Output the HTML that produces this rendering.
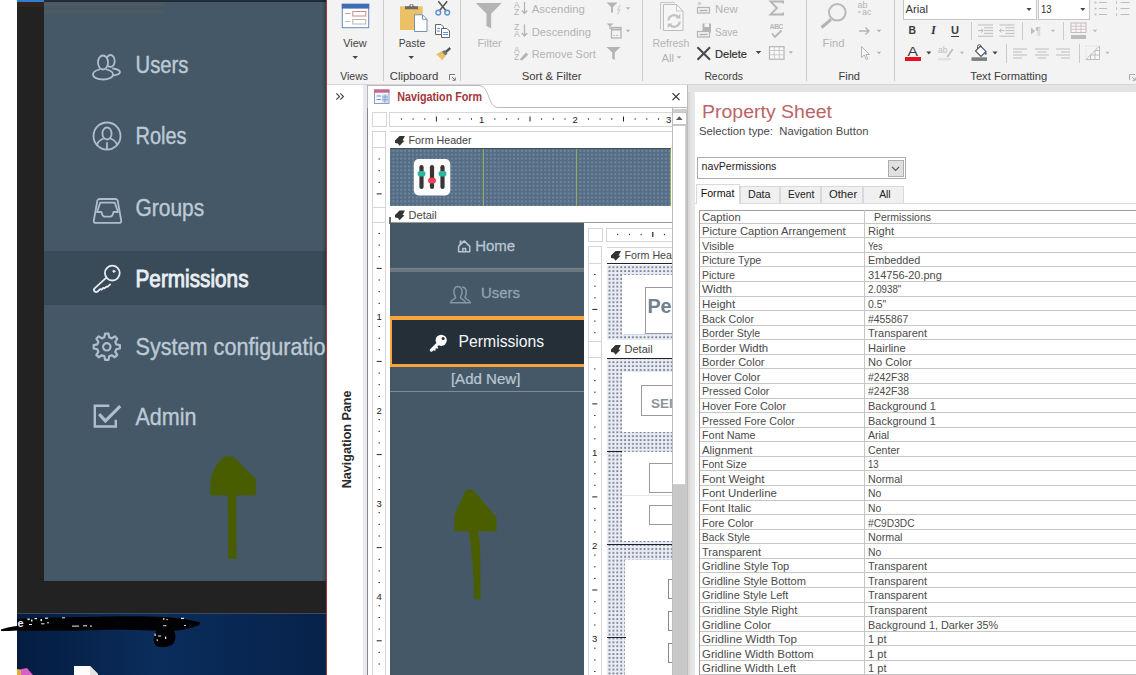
<!DOCTYPE html><html><head><meta charset="utf-8"><title>Access Navigation Form</title><style>
html,body{margin:0;padding:0;}
body{width:1136px;height:675px;overflow:hidden;position:relative;background:#fff;font-family:"Liberation Sans",sans-serif;}
.a{position:absolute;}
.t{position:absolute;white-space:pre;font-family:"Liberation Sans",sans-serif;}
svg{position:absolute;overflow:visible;}
</style></head><body><div class="a" style="left:17px;top:0px;width:310px;height:675px;background:#222222;"></div>
<div class="a" style="left:17px;top:0px;width:120px;height:2px;background:#2f7fd0;"></div>
<div class="a" style="left:44px;top:2px;width:282px;height:579px;background:#455867;"></div>
<div class="a" style="left:44px;top:0px;width:282px;height:2px;background:#1f2c37;"></div>
<div class="a" style="left:44px;top:251px;width:282px;height:54px;background:#394a58;"></div>
<div class="a" style="left:44px;top:3px;width:120px;height:3px;background:rgba(120,95,80,.28);"></div>
<div class="a" style="left:44px;top:9.5px;width:120px;height:3px;background:rgba(120,95,80,.22);"></div>
<div class="a" style="left:17px;top:2px;width:27px;height:5px;background:rgba(80,40,25,.35);"></div>
<div class="a" style="left:322px;top:0px;width:4px;height:581px;background:linear-gradient(90deg,rgba(0,0,0,0),rgba(0,0,0,.25));"></div>
<div class="a" style="left:17px;top:613px;width:310px;height:62px;background:linear-gradient(90deg,#041c40,#0a2d5c 45%,#06224a);"></div>
<div class="a" style="left:17px;top:613px;width:310px;height:1px;background:#3a4a5c;"></div>
<div class="a" style="left:326px;top:0px;width:1px;height:675px;background:#a4373a;"></div>
<span class="t" style="left:135.50px;top:53.30px;font-size:20.29px;line-height:27px;color:#bdcad5;transform:scaleY(1.200);transform-origin:0 20.50px;-webkit-text-stroke:0.35px #bdcad5;">Users</span>
<span class="t" style="left:135.50px;top:123.80px;font-size:19.95px;line-height:26px;color:#bdcad5;transform:scaleY(1.221);transform-origin:0 20.00px;-webkit-text-stroke:0.35px #bdcad5;">Roles</span>
<span class="t" style="left:135.50px;top:195.30px;font-size:20.95px;line-height:28px;color:#bdcad5;transform:scaleY(1.162);transform-origin:0 21.50px;-webkit-text-stroke:0.35px #bdcad5;">Groups</span>
<span class="t" style="left:135.50px;top:265.80px;font-size:20.75px;line-height:27px;color:#e9eef2;transform:scaleY(1.194);transform-origin:0 21.00px;-webkit-text-stroke:0.8px #e9eef2;">Permissions</span>
<span class="t" style="left:135.50px;top:333.00px;font-size:21.63px;line-height:29px;color:#bdcad5;transform:scaleY(1.126);transform-origin:0 22.00px;-webkit-text-stroke:0.35px #bdcad5;">System configuration</span>
<span class="t" style="left:135.50px;top:404.00px;font-size:21.52px;line-height:28px;color:#bdcad5;transform:scaleY(1.131);transform-origin:0 21.00px;-webkit-text-stroke:0.35px #bdcad5;">Admin</span>
<div class="a" style="left:326px;top:0px;width:1px;height:675px;background:#a4373a;"></div>
<svg style="left:92px;top:52px" width="30" height="30" viewBox="0 0 30 30" ><g fill="none" stroke="#adbfcd" stroke-width="1.8" stroke-linecap="round" stroke-linejoin="round"><ellipse cx="18.5" cy="9" rx="4.2" ry="6"/><path d="M21 16.5c4 .6 7 1.8 7 3.6 0 1.6-2.5 2.8-6 3.2"/><ellipse cx="11" cy="10.5" rx="5" ry="7" fill="#455867"/><path d="M7.5 17.5C3.5 18.5 1 20.300 1 22.500c0 3 4.500 5 10 5s10-2 10-5c0-2.200-2.500-4-6.500-5"/></g></svg>
<svg style="left:92px;top:121px" width="30" height="30" viewBox="0 0 30 30" ><g fill="none" stroke="#adbfcd" stroke-width="1.8" stroke-linecap="round" stroke-linejoin="round"><circle cx="15" cy="15" r="13.5"/><ellipse cx="15" cy="12.5" rx="4.6" ry="6"/><path d="M11.500 17.500C8 19 5.500 21 5 24M18.500 17.500C22 19 24.500 21 25 24M15 22v6"/></g></svg>
<svg style="left:0px;top:0px" width="1136" height="675" viewBox="0 0 1136 675" ><g fill="none" stroke="#adbfcd" stroke-width="1.8" stroke-linecap="round" stroke-linejoin="round"><path d="M99.500 199H115.500Q117.300 199 117.700 200.800L121.200 220.500Q121.500 222.900 119.200 222.900H95.800Q93.500 222.900 93.800 220.500L97.300 200.800Q97.700 199 99.500 199Z"/><path d="M100.200 202.700H114.800L118 212H113.500Q112.500 216.700 110.300 216.700H104.700Q102.500 216.700 101.500 212H97Z"/></g></svg>
<svg style="left:92px;top:264px" width="30" height="28" viewBox="0 0 30 28" ><g fill="none" stroke="#e6ecf1" stroke-width="1.8" stroke-linecap="round" stroke-linejoin="round"><circle cx="20.300" cy="9.100" r="7.400"/><circle cx="21.900" cy="7.300" r="1.100" fill="#e6ecf1" stroke-width=".8"/><path d="M14.400 13.600L2.600 24.300a2.200 2.200 0 0 0 3 3.200l2.600-2.400 1.300.5 1.700-1.600 1.300.3 1.800-1.700 1.200.3 2.600-2.500"/></g></svg>
<svg style="left:92px;top:332px" width="30" height="30" viewBox="0 0 30 30" ><g fill="none" stroke="#adbfcd" stroke-width="2.2" stroke-linecap="round" stroke-linejoin="round"><polygon points="13.09,1.71 16.51,1.71 17.22,5.30 19.80,6.37 22.85,4.33 25.27,6.75 23.23,9.80 24.29,12.37 27.89,13.09 27.89,16.51 24.30,17.22 23.23,19.80 25.27,22.85 22.85,25.27 19.80,23.23 17.23,24.29 16.51,27.89 13.09,27.89 12.38,24.30 9.80,23.23 6.75,25.27 4.33,22.85 6.37,19.80 5.31,17.23 1.71,16.51 1.71,13.09 5.30,12.38 6.37,9.80 4.33,6.75 6.75,4.33 9.80,6.37 12.37,5.31"/><circle cx="14.800" cy="14.800" r="3.700"/></g></svg>
<svg style="left:92px;top:403px" width="30" height="27" viewBox="0 0 30 27" ><g fill="none" stroke="#adbfcd" stroke-width="2.400" stroke-linejoin="miter"><path d="M17.300 2.800H2.800V23.500H23.800V16.700"/><path d="M7.200 11.100L13.400 17.900L28.200 3.100" stroke-width="3.100"/></g></svg>
<svg style="left:0px;top:0px" width="1136" height="675" viewBox="0 0 1136 675" ><path d="M224.300 456.400h8.800L255.800 479v16.400h-19.600l.4 63.500h-8.400l-.4-63.500h-17.400v-15.400Q214.500 463.500 224.300 456.400z" fill="#485d00"/></svg>
<svg style="left:0px;top:0px" width="1136" height="675" viewBox="0 0 1136 675" ><path d="M1 629.500C6 627.500 12 626.800 17 626V619C40 617.500 80 617 110 616.500C130 616 150 616.300 165 617C180 618 192 620 200 622.500C201 624.500 198 626 192 627.500C185 630 175 631.500 165 631C140 630.500 120 629.500 100 630C70 631 40 631 17 630.500C12 631 6 631 1 631Z" fill="#020204"/><path d="M156 631C160 629.500 170 629.500 174 631C176 634 176 640 173 644C168 647.500 160 648 156 646C153 642 152.500 636 156 631Z" fill="#020204"/><rect x="27.5" y="618.5" width="2.2" height="1.6" fill="#e8edf2"/><rect x="31" y="619.5" width="1.5" height="2" fill="#e8edf2"/><rect x="34.5" y="618" width="2.5" height="1.2" fill="#e8edf2"/><rect x="40.5" y="619" width="1.5" height="2.2" fill="#e8edf2"/><rect x="45" y="617.6" width="3" height="1.2" fill="#e8edf2"/><rect x="29" y="624" width="3" height="1" fill="#e8edf2"/><rect x="41" y="623.3" width="3.5" height="1" fill="#e8edf2"/><rect x="47" y="622.3" width="2" height="1" fill="#e8edf2"/><rect x="72" y="625.6" width="7" height="1" fill="#e8edf2"/><rect x="83" y="625.3" width="4" height="1" fill="#e8edf2"/><rect x="90" y="625.6" width="2" height="1" fill="#e8edf2"/><rect x="62" y="617.3" width="3" height="1" fill="#e8edf2"/><rect x="163" y="618.3" width="1.5" height="1.5" fill="#e8edf2"/><rect x="166.5" y="619" width="1.2" height="1.2" fill="#e8edf2"/><rect x="181" y="617.8" width="3" height="1.2" fill="#e8edf2"/><rect x="163" y="625.3" width="3.5" height="0.9" fill="#e8edf2"/><rect x="184" y="625" width="2" height="0.9" fill="#e8edf2"/><rect x="154.5" y="633.5" width="1.2" height="2.5" fill="#e8edf2"/><rect x="158" y="635.5" width="3" height="1" fill="#e8edf2"/><rect x="165" y="636.5" width="1.2" height="2.5" fill="#e8edf2"/><rect x="156.5" y="639.5" width="1.5" height="1.2" fill="#e8edf2"/></svg>
<span class="t" style="left:17.50px;top:615.80px;font-size:11px;line-height:15px;color:#e8edf2;font-weight:700;">e</span>
<svg style="left:0px;top:0px" width="1136" height="675" viewBox="0 0 1136 675" ><path d="M74 666h16l8 8v1H74z" fill="#fdfdfd"/><path d="M90 666l8 8v1h-8z" fill="#e4e4e4"/><path d="M17 670l10-2 6 7H17z" fill="#d860c8"/><path d="M17 669l4 1v5h-4z" fill="#e0b030"/></svg>
<div class="a" style="left:327px;top:0px;width:809px;height:84px;background:#f3f3f3;"></div>
<div class="a" style="left:327px;top:84px;width:809px;height:1px;background:#d6d6d6;"></div>
<div class="a" style="left:382.5px;top:0px;width:1px;height:81px;background:#cacaca;"></div>
<div class="a" style="left:459.5px;top:0px;width:1px;height:81px;background:#cacaca;"></div>
<div class="a" style="left:642px;top:0px;width:1px;height:81px;background:#cacaca;"></div>
<div class="a" style="left:805.5px;top:0px;width:1px;height:81px;background:#cacaca;"></div>
<div class="a" style="left:893.5px;top:0px;width:1px;height:81px;background:#cacaca;"></div>
<span class="t" style="left:340.30px;top:70.10px;font-size:10.42px;line-height:14px;color:#3b3b3b;transform:scaleY(1.126);transform-origin:0 10.50px;">Views</span>
<span class="t" style="left:389.80px;top:69.10px;font-size:11.34px;line-height:15px;color:#3b3b3b;transform:scaleY(1.035);transform-origin:0 11.50px;">Clipboard</span>
<span class="t" style="left:521.70px;top:69.10px;font-size:11.33px;line-height:15px;color:#3b3b3b;transform:scaleY(1.036);transform-origin:0 11.50px;">Sort &amp; Filter</span>
<span class="t" style="left:704.40px;top:70.10px;font-size:10.37px;line-height:14px;color:#3b3b3b;transform:scaleY(1.132);transform-origin:0 10.50px;">Records</span>
<span class="t" style="left:838.50px;top:69.10px;font-size:11.05px;line-height:15px;color:#3b3b3b;transform:scaleY(1.062);transform-origin:0 11.50px;">Find</span>
<span class="t" style="left:970.30px;top:69.10px;font-size:11.18px;line-height:15px;color:#3b3b3b;transform:scaleY(1.050);transform-origin:0 11.50px;">Text Formatting</span>
<span class="t" style="left:343.20px;top:35.50px;font-size:10.93px;line-height:15px;color:#444444;transform:scaleY(1.061);transform-origin:0 11.50px;">View</span>
<span class="t" style="left:398.70px;top:36.50px;font-size:10.36px;line-height:14px;color:#444444;transform:scaleY(1.119);transform-origin:0 10.50px;">Paste</span>
<span class="t" style="left:477.40px;top:35.50px;font-size:10.98px;line-height:15px;color:#b4b4b4;transform:scaleY(1.056);transform-origin:0 11.50px;">Filter</span>
<span class="t" style="left:652.50px;top:36.00px;font-size:10.56px;line-height:14px;color:#b4b4b4;transform:scaleY(1.098);transform-origin:0 11.00px;">Refresh</span>
<span class="t" style="left:661.50px;top:50.60px;font-size:11.24px;line-height:15px;color:#b4b4b4;transform:scaleY(1.031);transform-origin:0 11.50px;">All</span>
<span class="t" style="left:822.60px;top:35.50px;font-size:11.21px;line-height:15px;color:#b4b4b4;transform:scaleY(1.035);transform-origin:0 11.50px;">Find</span>
<span class="t" style="left:531.70px;top:2.40px;font-size:11.41px;line-height:15px;color:#b4b4b4;transform:scaleY(1.016);transform-origin:0 11.50px;">Ascending</span>
<span class="t" style="left:531.70px;top:24.80px;font-size:11.23px;line-height:15px;color:#b4b4b4;transform:scaleY(1.033);transform-origin:0 11.50px;">Descending</span>
<span class="t" style="left:531.70px;top:46.80px;font-size:10.97px;line-height:15px;color:#b4b4b4;transform:scaleY(1.057);transform-origin:0 11.50px;">Remove Sort</span>
<span class="t" style="left:715.00px;top:2.40px;font-size:11.39px;line-height:15px;color:#b4b4b4;transform:scaleY(1.018);transform-origin:0 11.50px;">New</span>
<span class="t" style="left:715.00px;top:25.80px;font-size:10.09px;line-height:14px;color:#b4b4b4;transform:scaleY(1.149);transform-origin:0 10.50px;">Save</span>
<span class="t" style="left:715.00px;top:46.80px;font-size:11.07px;line-height:15px;color:#2b2b2b;transform:scaleY(1.047);transform-origin:0 11.50px;-webkit-text-stroke:.15px #2b2b2b;">Delete</span>
<div class="a" style="left:902.5px;top:-1px;width:134px;height:20.5px;background:#fff;border:1px solid #c6c6c6;box-sizing:border-box;"></div>
<div class="a" style="left:1037.5px;top:-1px;width:52px;height:20.5px;background:#fff;border:1px solid #c6c6c6;box-sizing:border-box;"></div>
<span class="t" style="left:905.60px;top:1.80px;font-size:11.19px;line-height:15px;color:#333;transform:scaleY(1.036);transform-origin:0 11.50px;">Arial</span>
<span class="t" style="left:1041.00px;top:3.30px;font-size:9.52px;line-height:13px;color:#333;transform:scaleY(1.218);transform-origin:0 10.00px;">13</span>
<span class="t" style="left:908.50px;top:24.00px;font-size:10.38px;line-height:14px;color:#3b3b3b;font-weight:700;transform:scaleY(1.117);transform-origin:0 10.50px;">B</span>
<span class="t" style="left:931.00px;top:22.00px;font-size:12.5px;line-height:17px;color:#3b3b3b;font-weight:700;font-style:italic;font-family:'Liberation Serif';">I</span>
<span class="t" style="left:951.00px;top:23.00px;font-size:11.07px;line-height:15px;color:#3b3b3b;font-weight:700;transform:scaleY(1.047);transform-origin:0 11.50px;">U</span>
<div class="a" style="left:950.8px;top:36.2px;width:8.4px;height:1px;background:#3b3b3b;"></div>
<div class="a" style="left:970.5px;top:22px;width:1px;height:18px;background:#cacaca;"></div>
<div class="a" style="left:1021.5px;top:22px;width:1px;height:18px;background:#cacaca;"></div>
<div class="a" style="left:1063px;top:22px;width:1px;height:18px;background:#cacaca;"></div>
<div class="a" style="left:1005.5px;top:44px;width:1px;height:19px;background:#cacaca;"></div>
<div class="a" style="left:1078.5px;top:44px;width:1px;height:19px;background:#cacaca;"></div>
<span class="t" style="left:907.50px;top:40.20px;font-size:15.74px;line-height:21px;color:#3b3b3b;transform:scaleY(0.810);transform-origin:0 16.00px;">A</span>
<div class="a" style="left:905px;top:57.3px;width:15.5px;height:3.6px;background:#e81123;"></div>
<svg style="left:0px;top:0px" width="1136" height="675" viewBox="0 0 1136 675" ><path d="M352.45 56.00h5.50l-2.75 3.00z" fill="#444444"/><path d="M408.45 56.00h5.50l-2.75 3.00z" fill="#444444"/><path d="M676.75 56.25h4.50l-2.25 2.50z" fill="#b4b4b4"/><path d="M755.75 51.00h5.50l-2.75 3.00z" fill="#444444"/><path d="M788.55 51.25h4.50l-2.25 2.50z" fill="#b4b4b4"/><path d="M625.75 7.25h4.50l-2.25 2.50z" fill="#b4b4b4"/><path d="M625.75 29.75h4.50l-2.25 2.50z" fill="#b4b4b4"/><rect x="342.3" y="4.3" width="26.4" height="23.4" fill="#fff" stroke="#6787b7" stroke-width="1"/><rect x="341.8" y="3.8" width="27.4" height="4.800" fill="#3e6db5"/><path d="M345 13.500h5.500" stroke="#d79a9a" stroke-width="1"/><rect x="352.8" y="11.500" width="13" height="4.500" fill="#fff" stroke="#d08a8a"/><path d="M345 21.500h5.500" stroke="#c2c2c2" stroke-width="1"/><rect x="352.8" y="19.500" width="13" height="4.500" fill="#fff" stroke="#b5b5b5"/><rect x="400" y="6.300" width="22.700" height="23.700" fill="#ecc165"/><path d="M405 9.200v-3h4.200a2.300 2.300 0 0 1 4.600 0H418v3z" fill="#6a6a6a"/><circle cx="411.500" cy="5.500" r="1" fill="#f3f3f3"/><path d="M414.500 14.800h8l4.500 4.500v12.200h-12.500z" fill="#fff" stroke="#7a8fb5" stroke-width="1"/><path d="M422.500 14.800v4.500h4.500" fill="none" stroke="#7a8fb5" stroke-width="1"/><path d="M438.300 1.200l8.200 10M447.200 1.200l-8.200 10" stroke="#555" stroke-width="1.500" fill="none"/><circle cx="438.300" cy="12.600" r="2.400" fill="none" stroke="#5d93d6" stroke-width="1.400"/><circle cx="447.200" cy="12.600" r="2.400" fill="none" stroke="#5d93d6" stroke-width="1.400"/><path d="M435.500 24.500h5.500l2.500 2.500v7.500h-8z" fill="#fff" stroke="#666" stroke-width="1"/><path d="M441.500 28.500h5.500l2.500 2.500v6.500h-8z" fill="#fff" stroke="#666" stroke-width="1"/><path d="M437 28.500h3M437 31h3M443 32.500h5M443 34.500h5" stroke="#5d93d6" stroke-width="1"/><path d="M444.500 51.500l5-4.500 1.500 2-5 4.500z" fill="#555"/><path d="M441.500 52l3-2 3 3.800-2.500 2z" fill="#777"/><path d="M436 54.500l5.500-3.200 4 5-3.500 4.200c-1.500-2.500-3.500-4.500-6-6z" fill="#ecc165"/><path d="M475.80 3.00h26.00l-10.66 10.71v14.79l-4.68 -2.55v-12.24z" fill="#b4b4b4"/><path d="M606.50 2.50h11.00l-4.51 4.41v6.09l-1.98 -1.05v-5.04z" fill="#b4b4b4"/><path d="M620.300 5l-2.600 4.600h2.200l-2.400 5" stroke="#cdcdcd" fill="none" stroke-width="1.100"/><path d="M606.50 23.50h7.00l-2.87 2.52v3.48l-1.26 -0.60v-2.88z" fill="#b4b4b4"/><rect x="611.500" y="27.500" width="9.500" height="10.500" fill="none" stroke="#b4b4b4" stroke-width="1.300"/><path d="M611.500 29.500h9.500" stroke="#b4b4b4" stroke-width="2"/><path d="M613.500 35.500h5.500" stroke="#b4b4b4" stroke-dasharray="1.500 1" stroke-width="1"/><path d="M606.50 47.00h14.00l-5.74 5.46v7.54l-2.52 -1.30v-6.24z" fill="#b4b4b4"/><text x="514" y="7.5" font-size="8.500" fill="#b4b4b4" font-family="Liberation Sans">A</text><text x="514" y="14.5" font-size="8.500" fill="#b4b4b4" font-family="Liberation Sans">Z</text><path d="M524.500 2.0v11.500M521.800 10.5l2.700 3 2.700-3" fill="none" stroke="#b4b4b4" stroke-width="1.300"/><text x="514" y="30.0" font-size="8.500" fill="#b4b4b4" font-family="Liberation Sans">Z</text><text x="514" y="37.0" font-size="8.500" fill="#b4b4b4" font-family="Liberation Sans">A</text><path d="M524.500 24.5v11.500M521.800 33.0l2.700 3 2.700-3" fill="none" stroke="#b4b4b4" stroke-width="1.300"/><text x="514" y="52.5" font-size="8.500" fill="#b4b4b4" font-family="Liberation Sans">A</text><text x="514" y="59.5" font-size="8.500" fill="#b4b4b4" font-family="Liberation Sans">Z</text><path d="M520.500 58.500l5.500-6 2.200 2.200-5.700 5.500h-2.500z" fill="#b4b4b4"/><path d="M660.500 2.500h14M660.500 2.500v27" fill="none" stroke="#c6c6c6" stroke-width="1"/><path d="M663.500 4.500h13l6.500 6.500v19.500h-19.500z" fill="#f6f6f6" stroke="#bdbdbd" stroke-width="1"/><path d="M676.500 4.500v6.500h6.500" fill="none" stroke="#c9c9c9" stroke-width="1"/><path d="M668.300 20.500a5.700 5.700 0 0 1 10-3.300M679.700 21.500a5.700 5.700 0 0 1-10 3.300" fill="none" stroke="#c2c2c2" stroke-width="2.200"/><path d="M680.300 13.800v4.800h-4.800zM667.700 28.200v-4.800h4.800z" fill="#c2c2c2"/><rect x="697.500" y="7.500" width="12" height="5.500" fill="none" stroke="#b4b4b4" stroke-width="1.200"/><path d="M699.500 10.500h8" stroke="#b4b4b4" stroke-width="1.500"/><path d="M699.500 1.500v4M697.500 3.500h4M698 2l3 3M701 2l-3 3" stroke="#cfcfcf" stroke-width=".8"/><rect x="702.500" y="23.500" width="8.500" height="9" fill="#b4b4b4"/><rect x="704.500" y="23.500" width="4.500" height="3.500" fill="#f3f3f3"/><rect x="697.500" y="31.500" width="12" height="5.500" fill="#f3f3f3" stroke="#b4b4b4" stroke-width="1.200"/><path d="M699.500 34.500h8" stroke="#b4b4b4" stroke-width="1.500"/><path d="M697.500 47.300l12.500 12.500M710 47.300l-12.500 12.500" stroke="#4a4a4a" stroke-width="2.100" fill="none"/><path d="M783 3.500v-2h-12.500l6.500 6.500-6.500 6.500h12.500v-2" fill="none" stroke="#b4b4b4" stroke-width="1.800"/><text x="769.800" y="29" font-size="6.500" font-weight="700" fill="#b4b4b4" font-family="Liberation Sans" textLength="13.500">ABC</text><path d="M772 33.500l3 3.500 6.500-6.500" fill="none" stroke="#b4b4b4" stroke-width="1.800"/><rect x="769.500" y="46.700" width="14.500" height="12.500" fill="#fbfbfb" stroke="#b4b4b4" stroke-width="1.200"/><path d="M769.500 50.500h14.500M769.500 54.800h14.500M774.300 46.700v12.500M779.200 46.700v12.500" stroke="#c9c9c9" stroke-width="1"/><circle cx="837.300" cy="12.300" r="8.300" fill="none" stroke="#b9b9b9" stroke-width="2"/><path d="M831 19.500l-9.500 8" stroke="#b4b4b4" stroke-width="3"/><text x="857.500" y="7.500" font-size="9" fill="#b4b4b4" font-family="Liberation Sans">ab</text><text x="862" y="15" font-size="9" fill="#b4b4b4" font-family="Liberation Sans">ac</text><path d="M858 12h2.500" stroke="#b4b4b4" stroke-width="1.200"/><path d="M859 31h10M865.500 27.500l3.500 3.500-3.500 3.500" fill="none" stroke="#b4b4b4" stroke-width="1.400"/><path d="M876.75 29.75h4.50l-2.25 2.50z" fill="#b4b4b4"/><path d="M876.75 51.75h4.50l-2.25 2.50z" fill="#b4b4b4"/><path d="M861.500 46.500v11l2.800-2.500 2 4.500 1.600-.700-2-4.300h3.600z" fill="#f7f7f7" stroke="#b4b4b4" stroke-width="1"/><path d="M1026.50 8.10h5.00l-2.50 2.80z" fill="#444"/><path d="M1080.30 8.10h5.00l-2.50 2.80z" fill="#444"/><path d="M978.00 25.00h15.00" stroke="#bdbdbd" stroke-width="1"/><path d="M984.00 27.80h9.00" stroke="#bdbdbd" stroke-width="1"/><path d="M984.00 30.60h9.00" stroke="#bdbdbd" stroke-width="1"/><path d="M984.00 33.40h9.00" stroke="#bdbdbd" stroke-width="1"/><path d="M978.00 36.20h15.00" stroke="#bdbdbd" stroke-width="1"/><path d="M978 30.600h5M981 28.500l2.200 2.100-2.200 2.100" fill="none" stroke="#bdbdbd" stroke-width="1"/><path d="M999.50 25.00h15.00" stroke="#bdbdbd" stroke-width="1"/><path d="M1005.50 27.80h9.00" stroke="#bdbdbd" stroke-width="1"/><path d="M1005.50 30.60h9.00" stroke="#bdbdbd" stroke-width="1"/><path d="M1005.50 33.40h9.00" stroke="#bdbdbd" stroke-width="1"/><path d="M999.50 36.20h15.00" stroke="#bdbdbd" stroke-width="1"/><path d="M999.500 30.600h5M1001.700 28.500l-2.200 2.100 2.200 2.100" fill="none" stroke="#bdbdbd" stroke-width="1"/><path d="M1031 27.500l4 3.500-4 3.500z" fill="#bdbdbd"/><text x="1035.500" y="35" font-size="10" fill="#bdbdbd" font-family="Liberation Sans">¶</text><path d="M1050.75 29.75h4.50l-2.25 2.50z" fill="#bdbdbd"/><path d="M1092.75 29.75h4.50l-2.25 2.50z" fill="#bdbdbd"/><path d="M1105.25 51.75h4.50l-2.25 2.50z" fill="#bdbdbd"/><rect x="1071" y="23" width="15" height="9.500" fill="#fbf4f6" stroke="#bdbdbd" stroke-width="1"/><path d="M1071 26.200h15M1071 29.300h15M1076 23v9.500M1081 23v9.500" stroke="#d3c3c8" stroke-width="1"/><rect x="1071" y="35" width="15" height="4" fill="#bcbcbc"/><circle cx="1095.500" cy="2.5" r="1.100" fill="#bdbdbd"/><path d="M1099 2.5h8" stroke="#bdbdbd"/><circle cx="1095.500" cy="8.5" r="1.100" fill="#bdbdbd"/><path d="M1099 8.5h8" stroke="#bdbdbd"/><circle cx="1095.500" cy="14.5" r="1.100" fill="#bdbdbd"/><path d="M1099 14.5h8" stroke="#bdbdbd"/><path d="M1116.500 1.3v2.500" stroke="#bdbdbd"/><path d="M1120.500 2.5h9" stroke="#bdbdbd"/><path d="M1116.500 7.3v2.500" stroke="#bdbdbd"/><path d="M1120.500 8.5h9" stroke="#bdbdbd"/><path d="M1116.500 13.3v2.500" stroke="#bdbdbd"/><path d="M1120.500 14.5h9" stroke="#bdbdbd"/><path d="M926.30 51.60h5.00l-2.50 2.80z" fill="#444"/><text x="938" y="53" font-size="8.500" fill="#bdbdbd" font-family="Liberation Sans">ab</text><path d="M946.500 56.500l5.500-8 1.500 1-5.500 8z" fill="#bdbdbd"/><rect x="938" y="58" width="13" height="2.500" fill="#e2e2e2"/><path d="M959.75 51.75h4.50l-2.25 2.50z" fill="#bdbdbd"/><path d="M975.500 51l5-5 5.500 5.500-5 5z" fill="#fff" stroke="#555" stroke-width="1.100"/><path d="M977.500 49v-2.500a1.800 1.800 0 0 1 3.600 0v1" fill="none" stroke="#555" stroke-width="1"/><path d="M985.500 50.500c1.600 2.200 1.600 4 .2 4.600-1.400-.6-1.400-2.400-.2-4.600z" fill="#3e6db5"/><rect x="971.500" y="57.300" width="15.500" height="3.600" fill="#7f7f7f"/><path d="M992.50 51.60h5.00l-2.50 2.80z" fill="#444"/><path d="M1013.00 49.00h14.00" stroke="#bdbdbd" stroke-width="1"/><path d="M1013.00 52.00h9.00" stroke="#bdbdbd" stroke-width="1"/><path d="M1013.00 55.00h14.00" stroke="#bdbdbd" stroke-width="1"/><path d="M1013.00 58.00h9.00" stroke="#bdbdbd" stroke-width="1"/><path d="M1035.00 49.00h14.00" stroke="#bdbdbd" stroke-width="1"/><path d="M1037.50 52.00h9.00" stroke="#bdbdbd" stroke-width="1"/><path d="M1035.00 55.00h14.00" stroke="#bdbdbd" stroke-width="1"/><path d="M1037.50 58.00h9.00" stroke="#bdbdbd" stroke-width="1"/><path d="M1056.00 49.00h14.00" stroke="#bdbdbd" stroke-width="1"/><path d="M1061.00 52.00h9.00" stroke="#bdbdbd" stroke-width="1"/><path d="M1056.00 55.00h14.00" stroke="#bdbdbd" stroke-width="1"/><path d="M1061.00 58.00h9.00" stroke="#bdbdbd" stroke-width="1"/><path d="M1086 59.500h13.500v-13.500z" fill="#fafafa" stroke="#bdbdbd" stroke-width="1"/><path d="M1090.500 55v4.500M1095 50.500v9M1090.500 55h9M1095 50.500h4.500" stroke="#bdbdbd" stroke-width="1"/><path d="M1086 46v13.500" stroke="#dadada" stroke-dasharray="1 1"/><path d="M1086 46h13.500" stroke="#dadada" stroke-dasharray="1 1"/><path d="M449.5 80.0v-5.500h5.500" fill="none" stroke="#777" stroke-width="1"/><path d="M452.0 77.0l3 3M455.3 80.3v-2.800M455.3 80.3h-2.800" stroke="#777" stroke-width="1" fill="none"/><path d="M1129.5 80.0v-5.500h5.500" fill="none" stroke="#aaa" stroke-width="1"/><path d="M1132.0 77.0l3 3M1135.3 80.3v-2.800M1135.3 80.3h-2.800" stroke="#aaa" stroke-width="1" fill="none"/></svg>
<div class="a" style="left:327px;top:85px;width:36px;height:590px;background:#fff;"></div>
<div class="a" style="left:363px;top:85px;width:4px;height:590px;background:#e9e9ef;"></div>
<div class="a" style="left:367px;top:85px;width:1px;height:590px;background:#8a8a8a;"></div>
<div class="a" style="left:368px;top:85px;width:319px;height:590px;background:#fff;"></div>
<div class="a" style="left:347px;top:438.700px;width:0;height:0;"><span class="t" style="left:-49.2px;top:-8px;font-size:12.600px;line-height:16px;font-weight:700;color:#2b2b2b;transform:rotate(-90deg);transform-origin:49.200px 8px;letter-spacing:-0.02px">Navigation Pane</span></div>
<div class="a" style="left:368px;top:85px;width:319px;height:23px;background:#fff;"></div>
<span class="t" style="left:397.20px;top:90.00px;font-size:10.78px;line-height:15px;color:#a4373a;font-weight:700;transform:scaleY(1.116);transform-origin:0 11.50px;">Navigation Form</span>
<div class="a" style="left:371.5px;top:111.5px;width:15px;height:15px;background:#fff;border:1px solid #d6d6d6;box-sizing:border-box;"></div>
<div class="a" style="left:388.7px;top:111.5px;width:283px;height:15px;background:#fff;border:1px solid #d6d6d6;border-right:none;box-sizing:border-box;"></div>
<div class="a" style="left:371.5px;top:130.8px;width:14px;height:545px;background:#fff;border:1px solid #d6d6d6;border-bottom:none;box-sizing:border-box;"></div>
<div class="a" style="left:371.5px;top:130.8px;width:14px;height:17px;background:#fff;border:1px solid #d6d6d6;box-sizing:border-box;"></div>
<div class="a" style="left:371.5px;top:206.5px;width:14px;height:16.5px;background:#fff;border:1px solid #d6d6d6;box-sizing:border-box;"></div>
<span class="t" style="left:479.10px;top:112.50px;font-size:9.5px;line-height:13px;color:#222;">1</span>
<span class="t" style="left:572.60px;top:112.50px;font-size:9.5px;line-height:13px;color:#222;">2</span>
<span class="t" style="left:666.10px;top:112.50px;font-size:9.5px;line-height:13px;color:#222;">3</span>
<span class="t" style="left:376.40px;top:310.40px;font-size:9.5px;line-height:13px;color:#222;">1</span>
<span class="t" style="left:376.40px;top:403.50px;font-size:9.5px;line-height:13px;color:#222;">2</span>
<span class="t" style="left:376.40px;top:496.60px;font-size:9.5px;line-height:13px;color:#222;">3</span>
<span class="t" style="left:376.40px;top:589.70px;font-size:9.5px;line-height:13px;color:#222;">4</span>
<div class="a" style="left:390px;top:131px;width:281.5px;height:17px;background:#fff;border-top:1px solid #d6d6d6;box-sizing:border-box;"></div>
<span class="t" style="left:408.60px;top:133.20px;font-size:10.69px;line-height:14px;color:#444;transform:scaleY(1.030);transform-origin:0 11.00px;">Form Header</span>
<div class="a" style="left:390.3px;top:147.6px;width:280.7px;height:58.7px;background:#556e86;background-image:radial-gradient(circle at 1px 1px,rgba(225,235,245,.33) 0.5px,rgba(225,235,245,0) 0.95px);background-size:3.896px 3.896px;background-position:2.5px 0.8px;border-top:1.500px solid #3b4f60;box-sizing:border-box;"></div>
<div class="a" style="left:483px;top:148.5px;width:1px;height:57.8px;background:#8fae5a;"></div>
<div class="a" style="left:576.4px;top:148.5px;width:1px;height:57.8px;background:#8fae5a;"></div>
<div class="a" style="left:670px;top:148.5px;width:1px;height:57.8px;background:#8fae5a;"></div>
<div class="a" style="left:390px;top:206.3px;width:281.5px;height:16.5px;background:#fff;border-bottom:1px solid #9a9a9a;box-sizing:border-box;"></div>
<span class="t" style="left:408.60px;top:207.60px;font-size:11.03px;line-height:15px;color:#444;transform:scaleY(0.999);transform-origin:0 11.50px;">Detail</span>
<div class="a" style="left:388.5px;top:217px;width:2.5px;height:7px;background:#6d6d6d;"></div>
<div class="a" style="left:390.3px;top:223px;width:193.4px;height:452px;background:#455867;"></div>
<div class="a" style="left:390.3px;top:268px;width:193.4px;height:4px;background:#6c767e;"></div>
<div class="a" style="left:390.3px;top:268px;width:193.4px;height:1px;background:#78828a;"></div>
<div class="a" style="left:390.3px;top:316px;width:193.4px;height:51px;background:#f5a53c;"></div>
<div class="a" style="left:391.6px;top:320.2px;width:192.1px;height:43.4px;background:#242f38;"></div>
<div class="a" style="left:390.3px;top:391px;width:193.4px;height:1px;background:#7e8c98;"></div>
<span class="t" style="left:475.20px;top:235.50px;font-size:14.99px;line-height:20px;color:#b8c5d0;transform:scaleY(1.025);transform-origin:0 15.50px;-webkit-text-stroke:.3px #b8c5d0;">Home</span>
<span class="t" style="left:481.00px;top:282.90px;font-size:14.93px;line-height:20px;color:#91a4b3;transform:scaleY(1.029);transform-origin:0 15.50px;-webkit-text-stroke:.3px #91a4b3;">Users</span>
<span class="t" style="left:458.60px;top:331.30px;font-size:15.72px;line-height:21px;color:#f4f6f8;transform:scaleY(1.107);transform-origin:0 16.00px;">Permissions</span>
<span class="t" style="left:450.90px;top:369.30px;font-size:15.09px;line-height:20px;color:#b9c6d1;transform:scaleY(0.980);transform-origin:0 15.50px;-webkit-text-stroke:.25px #b9c6d1;">[Add New]</span>
<div class="a" style="left:583.7px;top:223.5px;width:88px;height:452px;background:#fff;"></div>
<div class="a" style="left:587.5px;top:227.5px;width:15px;height:14.5px;background:#fff;border:1px solid #d6d6d6;box-sizing:border-box;"></div>
<div class="a" style="left:605.5px;top:227.5px;width:66px;height:14.5px;background:#fff;border:1px solid #d6d6d6;border-right:none;box-sizing:border-box;"></div>
<div class="a" style="left:587.5px;top:246px;width:14px;height:430px;background:#fff;border:1px solid #d6d6d6;border-bottom:none;box-sizing:border-box;"></div>
<div class="a" style="left:587.5px;top:246px;width:14px;height:17.5px;background:#fff;border:1px solid #d6d6d6;box-sizing:border-box;"></div>
<div class="a" style="left:587.5px;top:340.5px;width:14px;height:17.5px;background:#fff;border:1px solid #d6d6d6;box-sizing:border-box;"></div>
<span class="t" style="left:592.00px;top:445.90px;font-size:9.5px;line-height:13px;color:#222;">1</span>
<span class="t" style="left:592.00px;top:539.00px;font-size:9.5px;line-height:13px;color:#222;">2</span>
<span class="t" style="left:592.00px;top:632.10px;font-size:9.5px;line-height:13px;color:#222;">3</span>
<div class="a" style="left:606.5px;top:246.5px;width:65px;height:17px;background:#fff;border-top:1px solid #d6d6d6;border-bottom:1.500px solid #222;box-sizing:border-box;"></div>
<span class="t" style="left:624.50px;top:248.20px;font-size:10.69px;line-height:14px;color:#444;transform:scaleY(1.030);transform-origin:0 11.00px;">Form Header</span>
<div class="a" style="left:606.5px;top:265px;width:65px;height:75.4px;background:#e7ebf5;background-image:radial-gradient(circle at 1px 1px,rgba(25,25,40,.95) 0.45px,rgba(25,25,40,0) 0.9px);background-size:3.896px 3.896px;background-position:1.500px 1.200px;"></div>
<div class="a" style="left:622px;top:275.3px;width:49.5px;height:59px;background:#fff;"></div>
<div class="a" style="left:645.4px;top:287px;width:30px;height:46.7px;background:#fff;border:1px solid #9a9a9a;box-sizing:border-box;"></div>
<span class="t" style="left:647.40px;top:292.90px;font-size:19.8px;line-height:26px;color:#72808c;font-weight:700;">Pe</span>
<div class="a" style="left:606.5px;top:340.4px;width:65px;height:18.3px;background:#fff;border-bottom:1.500px solid #222;box-sizing:border-box;"></div>
<span class="t" style="left:624.50px;top:341.80px;font-size:11.03px;line-height:15px;color:#444;transform:scaleY(0.999);transform-origin:0 11.50px;">Detail</span>
<div class="a" style="left:606.5px;top:358.7px;width:65px;height:317px;background:#e7ebf5;background-image:radial-gradient(circle at 1px 1px,rgba(25,25,40,.95) 0.45px,rgba(25,25,40,0) 0.9px);background-size:3.896px 3.896px;background-position:1.500px 2.200px;"></div>
<div class="a" style="left:622px;top:372.4px;width:49.5px;height:59.2px;background:#fff;"></div>
<div class="a" style="left:641.3px;top:385.3px;width:34px;height:30.3px;background:#fff;border:1px solid #9a9a9a;box-sizing:border-box;"></div>
<span class="t" style="left:651.00px;top:394.50px;font-size:13.5px;line-height:18px;color:#8a949c;font-weight:700;">SEI</span>
<div class="a" style="left:606.5px;top:451px;width:15.5px;height:1px;background:#222;"></div>
<div class="a" style="left:622px;top:452px;width:49.5px;height:88.5px;background:#fff;"></div>
<div class="a" style="left:622px;top:495px;width:49.5px;height:1px;background:#e6e6e6;"></div>
<div class="a" style="left:649px;top:462.7px;width:26px;height:30.7px;background:#fff;border:1px solid #9a9a9a;box-sizing:border-box;"></div>
<div class="a" style="left:649px;top:505.4px;width:26px;height:20px;background:#fff;border:1px solid #9a9a9a;box-sizing:border-box;"></div>
<div class="a" style="left:606.5px;top:543.6px;width:65px;height:1.2px;background:#222;"></div>
<div class="a" style="left:624.5px;top:560.3px;width:47px;height:115px;background:#fff;"></div>
<div class="a" style="left:606.5px;top:637px;width:19px;height:1px;background:#222;"></div>
<div class="a" style="left:668.4px;top:579px;width:8px;height:19.6px;background:#fff;border:1px solid #8a8a8a;box-sizing:border-box;"></div>
<div class="a" style="left:668.4px;top:611px;width:8px;height:19.6px;background:#fff;border:1px solid #8a8a8a;box-sizing:border-box;"></div>
<div class="a" style="left:668.4px;top:643px;width:8px;height:19.6px;background:#fff;border:1px solid #8a8a8a;box-sizing:border-box;"></div>
<div class="a" style="left:671.5px;top:108.5px;width:16px;height:567px;background:#c8c8c8;"></div>
<div class="a" style="left:671.5px;top:108.5px;width:16px;height:3px;background:#cfcfcf;"></div>
<div class="a" style="left:672px;top:126px;width:14px;height:359px;background:#fff;border:1px solid #d0d0d0;border-top:none;box-sizing:border-box;"></div>
<div class="a" style="left:672px;top:111.5px;width:14.5px;height:13.5px;background:#fff;border:1px solid #c4c4c4;box-sizing:border-box;"></div>
<div class="a" style="left:671.5px;top:108px;width:1px;height:567px;background:#bdbdbd;"></div>
<div class="a" style="left:688px;top:85px;width:7.5px;height:590px;background:linear-gradient(90deg,#d6d6d6,#e4e4e4 40%,#ebebeb);"></div>
<svg style="left:0px;top:0px" width="1136" height="675" viewBox="0 0 1136 675" ><path d="M336.300 93.300l3.200 3.200-3.200 3.200M340.300 93.300l3.200 3.200-3.200 3.200" fill="none" stroke="#444" stroke-width="1.100"/><path d="M367.500 108V85.500H478c6 0 8 4 10.500 10.500 2.500 7 4.500 11.500 10 11.500H687.500" fill="none" stroke="#b9b9b9" stroke-width="1"/><path d="M687.500 85v590" stroke="#bdbdbd" stroke-width="1"/><rect x="374.500" y="90" width="14.500" height="13.500" fill="#f4f7fc" stroke="#8a9cc4" stroke-width="1"/><rect x="374" y="89.500" width="15.500" height="3.200" fill="#cc6686"/><path d="M376.500 96h4.500M376.500 99.500h4.500" stroke="#6c8fd0" stroke-width="1"/><rect x="382" y="94.500" width="6" height="8" fill="#c9d8f0"/><path d="M382 97h6M382 99.700h6M385 94.500v8" stroke="#7b9ad0" stroke-width=".8"/><path d="M672.500 93.200l7 7M679.500 93.200l-7 7" stroke="#333" stroke-width="1.200"/><rect x="400.9" y="118.300" width="1" height="1.400" fill="#222"/><rect x="412.6" y="118.300" width="1" height="1.400" fill="#222"/><rect x="424.3" y="118.300" width="1" height="1.400" fill="#222"/><path d="M436.4 116.500v5" stroke="#222" stroke-width="1"/><rect x="447.6" y="118.300" width="1" height="1.400" fill="#222"/><rect x="459.3" y="118.300" width="1" height="1.400" fill="#222"/><rect x="471.0" y="118.300" width="1" height="1.400" fill="#222"/><rect x="494.4" y="118.300" width="1" height="1.400" fill="#222"/><rect x="506.1" y="118.300" width="1" height="1.400" fill="#222"/><rect x="517.8" y="118.300" width="1" height="1.400" fill="#222"/><path d="M530.0 116.500v5" stroke="#222" stroke-width="1"/><rect x="541.1" y="118.300" width="1" height="1.400" fill="#222"/><rect x="552.8" y="118.300" width="1" height="1.400" fill="#222"/><rect x="564.5" y="118.300" width="1" height="1.400" fill="#222"/><rect x="587.9" y="118.300" width="1" height="1.400" fill="#222"/><rect x="599.6" y="118.300" width="1" height="1.400" fill="#222"/><rect x="611.3" y="118.300" width="1" height="1.400" fill="#222"/><path d="M623.5 116.500v5" stroke="#222" stroke-width="1"/><rect x="634.6" y="118.300" width="1" height="1.400" fill="#222"/><rect x="646.3" y="118.300" width="1" height="1.400" fill="#222"/><rect x="658.0" y="118.300" width="1" height="1.400" fill="#222"/><rect x="378.5" y="158.5" width="1.400" height="1" fill="#222"/><rect x="378.5" y="170.2" width="1.400" height="1" fill="#222"/><rect x="378.5" y="181.8" width="1.400" height="1" fill="#222"/><path d="M376.7 193.9h5" stroke="#222" stroke-width="1"/><rect x="378.5" y="232.9" width="1.400" height="1" fill="#222"/><rect x="378.5" y="244.6" width="1.400" height="1" fill="#222"/><rect x="378.5" y="256.2" width="1.400" height="1" fill="#222"/><path d="M376.7 268.4h5" stroke="#222" stroke-width="1"/><rect x="378.5" y="279.5" width="1.400" height="1" fill="#222"/><rect x="378.5" y="291.1" width="1.400" height="1" fill="#222"/><rect x="378.5" y="302.8" width="1.400" height="1" fill="#222"/><rect x="378.5" y="326.0" width="1.400" height="1" fill="#222"/><rect x="378.5" y="337.7" width="1.400" height="1" fill="#222"/><rect x="378.5" y="349.3" width="1.400" height="1" fill="#222"/><path d="M376.7 361.4h5" stroke="#222" stroke-width="1"/><rect x="378.5" y="372.6" width="1.400" height="1" fill="#222"/><rect x="378.5" y="384.2" width="1.400" height="1" fill="#222"/><rect x="378.5" y="395.9" width="1.400" height="1" fill="#222"/><rect x="378.5" y="419.1" width="1.400" height="1" fill="#222"/><rect x="378.5" y="430.8" width="1.400" height="1" fill="#222"/><rect x="378.5" y="442.4" width="1.400" height="1" fill="#222"/><path d="M376.7 454.6h5" stroke="#222" stroke-width="1"/><rect x="378.5" y="465.7" width="1.400" height="1" fill="#222"/><rect x="378.5" y="477.3" width="1.400" height="1" fill="#222"/><rect x="378.5" y="489.0" width="1.400" height="1" fill="#222"/><rect x="378.5" y="512.2" width="1.400" height="1" fill="#222"/><rect x="378.5" y="523.9" width="1.400" height="1" fill="#222"/><rect x="378.5" y="535.5" width="1.400" height="1" fill="#222"/><path d="M376.7 547.6h5" stroke="#222" stroke-width="1"/><rect x="378.5" y="558.8" width="1.400" height="1" fill="#222"/><rect x="378.5" y="570.4" width="1.400" height="1" fill="#222"/><rect x="378.5" y="582.1" width="1.400" height="1" fill="#222"/><rect x="378.5" y="605.3" width="1.400" height="1" fill="#222"/><rect x="378.5" y="617.0" width="1.400" height="1" fill="#222"/><rect x="378.5" y="628.6" width="1.400" height="1" fill="#222"/><path d="M376.7 640.8h5" stroke="#222" stroke-width="1"/><rect x="378.5" y="651.9" width="1.400" height="1" fill="#222"/><rect x="378.5" y="663.5" width="1.400" height="1" fill="#222"/><path d="M395.0 140.5l4.500-4.500h5.500l-2.500 4.500 2 .2-5 5-1.500-2.200-3 -.500z" fill="#333"/><path d="M395.0 215.0l4.500-4.500h5.500l-2.500 4.500 2 .2-5 5-1.500-2.200-3 -.500z" fill="#333"/><rect x="413.800" y="159" width="36.500" height="36.500" rx="5" fill="#fbfbfb"/><path d="M421.5 167.200v19.800" stroke="#3a3436" stroke-width="4.200" stroke-linecap="round"/><rect x="417.5" y="171.0" width="8" height="5.600" rx="2.800" fill="#2bb89a"/><path d="M432.0 167.200v19.800" stroke="#3a3436" stroke-width="4.200" stroke-linecap="round"/><rect x="428.0" y="177.8" width="8" height="5.600" rx="2.800" fill="#ee4455"/><path d="M442.5 167.200v19.800" stroke="#3a3436" stroke-width="4.200" stroke-linecap="round"/><rect x="438.5" y="171.0" width="8" height="5.600" rx="2.800" fill="#2bb89a"/><path d="M458.600 246.400L464.200 240.900L469.800 246.400V251.800H458.600Z M462.800 251.800v-3.400h2.800v3.400 M460.300 244.300v-3h1.300" fill="none" stroke="#b8c5d0" stroke-width="1.500" stroke-linejoin="round"/><g fill="none" stroke="#8497a6" stroke-width="1.500"><path d="M462 287c3.500 0 4.500 3 4.200 6-.300 2.500-1.200 3.500-1.200 4.500 0 1.500 4.800 2 5.200 5.200h-5"/><path d="M457.500 286.500c3.800 0 4.800 3.200 4.500 6.200-.3 2.600-1.500 3.600-1.500 4.800 0 1.600 4.500 2 5 5.300h-15c.500-3.300 5-3.700 5-5.300 0-1.200-1.200-2.200-1.500-4.800-.3-3 .7-6.200 3.500-6.200z" fill="#455867"/></g><circle cx="441.200" cy="340.300" r="5.600" fill="#fafafa"/><circle cx="443.100" cy="338.600" r="1.500" fill="#242f38"/><path d="M438.300 343.300L431.400 350.100" stroke="#fafafa" stroke-width="3.200" stroke-linecap="round"/><path d="M436.500 345.500l1.800 2.200-1.300 1.200-1-1-1 1 1 1-1.300 1.200-2.200-2z" fill="#fafafa"/><path d="M465.300 490.700c2.500-1.200 5.500-1.400 8-.8l23.200 27.400v14.200l-18.600-.2c2 8 2.400 15 2.200 22 .3 16 .4 30 .4 45.900h-6.400c-.3-16-.8-30-2.600-45.900-.5-7-1.400-14-2.700-21.800l-14.700-.2c-.2-5.300.1-11 .6-16 3-8 7-16 10.600-24.600z" fill="#4a5e00"/><rect x="617.2" y="233.800" width="1" height="1.400" fill="#222"/><rect x="628.9" y="233.800" width="1" height="1.400" fill="#222"/><rect x="640.6" y="233.800" width="1" height="1.400" fill="#222"/><path d="M652.8 232v5" stroke="#222" stroke-width="1.200"/><rect x="663.9" y="233.800" width="1" height="1.400" fill="#222"/><rect x="594.1" y="274.0" width="1.400" height="1" fill="#222"/><rect x="594.1" y="285.7" width="1.400" height="1" fill="#222"/><rect x="594.1" y="297.3" width="1.400" height="1" fill="#222"/><path d="M592.3 309.4h5" stroke="#222" stroke-width="1"/><rect x="594.1" y="320.6" width="1.400" height="1" fill="#222"/><rect x="594.1" y="332.2" width="1.400" height="1" fill="#222"/><rect x="594.1" y="368.4" width="1.400" height="1" fill="#222"/><rect x="594.1" y="380.1" width="1.400" height="1" fill="#222"/><rect x="594.1" y="391.7" width="1.400" height="1" fill="#222"/><path d="M592.3 403.9h5" stroke="#222" stroke-width="1"/><rect x="594.1" y="415.0" width="1.400" height="1" fill="#222"/><rect x="594.1" y="426.6" width="1.400" height="1" fill="#222"/><rect x="594.1" y="438.3" width="1.400" height="1" fill="#222"/><rect x="594.1" y="461.5" width="1.400" height="1" fill="#222"/><rect x="594.1" y="473.2" width="1.400" height="1" fill="#222"/><rect x="594.1" y="484.8" width="1.400" height="1" fill="#222"/><path d="M592.3 496.9h5" stroke="#222" stroke-width="1"/><rect x="594.1" y="508.1" width="1.400" height="1" fill="#222"/><rect x="594.1" y="519.7" width="1.400" height="1" fill="#222"/><rect x="594.1" y="531.4" width="1.400" height="1" fill="#222"/><rect x="594.1" y="554.6" width="1.400" height="1" fill="#222"/><rect x="594.1" y="566.3" width="1.400" height="1" fill="#222"/><rect x="594.1" y="577.9" width="1.400" height="1" fill="#222"/><path d="M592.3 590.0h5" stroke="#222" stroke-width="1"/><rect x="594.1" y="601.2" width="1.400" height="1" fill="#222"/><rect x="594.1" y="612.8" width="1.400" height="1" fill="#222"/><rect x="594.1" y="624.5" width="1.400" height="1" fill="#222"/><rect x="594.1" y="647.7" width="1.400" height="1" fill="#222"/><rect x="594.1" y="659.4" width="1.400" height="1" fill="#222"/><rect x="594.1" y="671.0" width="1.400" height="1" fill="#222"/><path d="M611.0 255.5l4.500-4.500h5.500l-2.500 4.500 2 .2-5 5-1.500-2.200-3 -.500z" fill="#333"/><path d="M611.0 349.5l4.500-4.500h5.500l-2.500 4.500 2 .2-5 5-1.500-2.200-3 -.500z" fill="#333"/><path d="M676 120l3.300-3.800 3.300 3.800z" fill="#5a5a5a"/></svg>
<div class="a" style="left:688px;top:85px;width:448px;height:7px;background:#e4e4e4;"></div>
<div class="a" style="left:695.3px;top:92px;width:441px;height:583px;background:#fff;"></div>
<span class="t" style="left:702.00px;top:97.50px;font-size:19.49px;line-height:26px;color:#ba6467;transform:scaleY(0.989);transform-origin:0 20.00px;">Property Sheet</span>
<span class="t" style="left:698.90px;top:124.20px;font-size:11.30px;line-height:15px;color:#4a4a4a;transform:scaleY(0.975);transform-origin:0 11.50px;">Selection type:  Navigation Button</span>
<div class="a" style="left:697px;top:157.3px;width:209px;height:21.6px;background:#fff;border:1px solid #ababab;box-sizing:border-box;"></div>
<div class="a" style="left:887.5px;top:159.5px;width:16.2px;height:17.5px;background:#e1e1e1;border:1px solid #adadad;box-sizing:border-box;"></div>
<span class="t" style="left:701.60px;top:159.40px;font-size:10.60px;line-height:14px;color:#222;transform:scaleY(1.053);transform-origin:0 11.00px;">navPermissions</span>
<div class="a" style="left:695.3px;top:203px;width:441px;height:1px;background:#dcdcdc;"></div>
<div class="a" style="left:740.4px;top:185.6px;width:39.60000000000002px;height:17.9px;background:#f0f0f0;border:1px solid #d9d9d9;border-bottom:none;box-sizing:border-box;"></div>
<span class="t" style="left:747.90px;top:187.30px;font-size:10.74px;line-height:14px;color:#222;transform:scaleY(1.039);transform-origin:0 11.00px;">Data</span>
<div class="a" style="left:780px;top:185.6px;width:41.39999999999998px;height:17.9px;background:#f0f0f0;border:1px solid #d9d9d9;border-bottom:none;box-sizing:border-box;"></div>
<span class="t" style="left:788.00px;top:187.80px;font-size:10.28px;line-height:14px;color:#222;transform:scaleY(1.085);transform-origin:0 10.50px;">Event</span>
<div class="a" style="left:821.4px;top:185.6px;width:41.89999999999998px;height:17.9px;background:#f0f0f0;border:1px solid #d9d9d9;border-bottom:none;box-sizing:border-box;"></div>
<span class="t" style="left:828.90px;top:186.80px;font-size:11.31px;line-height:15px;color:#222;transform:scaleY(0.986);transform-origin:0 11.50px;">Other</span>
<div class="a" style="left:863.3px;top:185.6px;width:40.30000000000007px;height:17.9px;background:#f0f0f0;border:1px solid #d9d9d9;border-bottom:none;box-sizing:border-box;"></div>
<span class="t" style="left:879.20px;top:187.80px;font-size:10.34px;line-height:14px;color:#222;transform:scaleY(1.079);transform-origin:0 10.50px;">All</span>
<div class="a" style="left:696.4px;top:183.8px;width:44px;height:20.2px;background:#fff;border:1px solid #d9d9d9;border-bottom:none;box-sizing:border-box;"></div>
<span class="t" style="left:700.70px;top:185.50px;font-size:10.64px;line-height:14px;color:#111;transform:scaleY(1.049);transform-origin:0 11.00px;">Format</span>
<div class="a" style="left:699.3px;top:209.6px;width:437px;height:1px;background:#9f9f9f;"></div>
<div class="a" style="left:699.3px;top:209.6px;width:1px;height:466px;background:#9f9f9f;"></div>
<div class="a" style="left:864.3px;top:210px;width:1px;height:466px;background:#c6c6c6;"></div>
<div class="a" style="left:700px;top:222.7px;width:436px;height:1px;background:#c6c6c6;"></div>
<div class="a" style="left:700px;top:237.27px;width:436px;height:1px;background:#c6c6c6;"></div>
<div class="a" style="left:700px;top:251.84px;width:436px;height:1px;background:#c6c6c6;"></div>
<div class="a" style="left:700px;top:266.42px;width:436px;height:1px;background:#c6c6c6;"></div>
<div class="a" style="left:700px;top:280.99px;width:436px;height:1px;background:#c6c6c6;"></div>
<div class="a" style="left:700px;top:295.56px;width:436px;height:1px;background:#c6c6c6;"></div>
<div class="a" style="left:700px;top:310.13px;width:436px;height:1px;background:#c6c6c6;"></div>
<div class="a" style="left:700px;top:324.7px;width:436px;height:1px;background:#c6c6c6;"></div>
<div class="a" style="left:700px;top:339.28px;width:436px;height:1px;background:#c6c6c6;"></div>
<div class="a" style="left:700px;top:353.85px;width:436px;height:1px;background:#c6c6c6;"></div>
<div class="a" style="left:700px;top:368.42px;width:436px;height:1px;background:#c6c6c6;"></div>
<div class="a" style="left:700px;top:382.99px;width:436px;height:1px;background:#c6c6c6;"></div>
<div class="a" style="left:700px;top:397.56px;width:436px;height:1px;background:#c6c6c6;"></div>
<div class="a" style="left:700px;top:412.14px;width:436px;height:1px;background:#c6c6c6;"></div>
<div class="a" style="left:700px;top:426.71px;width:436px;height:1px;background:#c6c6c6;"></div>
<div class="a" style="left:700px;top:441.28px;width:436px;height:1px;background:#c6c6c6;"></div>
<div class="a" style="left:700px;top:455.85px;width:436px;height:1px;background:#c6c6c6;"></div>
<div class="a" style="left:700px;top:470.42px;width:436px;height:1px;background:#c6c6c6;"></div>
<div class="a" style="left:700px;top:485.0px;width:436px;height:1px;background:#c6c6c6;"></div>
<div class="a" style="left:700px;top:499.57px;width:436px;height:1px;background:#c6c6c6;"></div>
<div class="a" style="left:700px;top:514.14px;width:436px;height:1px;background:#c6c6c6;"></div>
<div class="a" style="left:700px;top:528.71px;width:436px;height:1px;background:#c6c6c6;"></div>
<div class="a" style="left:700px;top:543.28px;width:436px;height:1px;background:#c6c6c6;"></div>
<div class="a" style="left:700px;top:557.86px;width:436px;height:1px;background:#c6c6c6;"></div>
<div class="a" style="left:700px;top:572.43px;width:436px;height:1px;background:#c6c6c6;"></div>
<div class="a" style="left:700px;top:587.0px;width:436px;height:1px;background:#c6c6c6;"></div>
<div class="a" style="left:700px;top:601.57px;width:436px;height:1px;background:#c6c6c6;"></div>
<div class="a" style="left:700px;top:616.14px;width:436px;height:1px;background:#c6c6c6;"></div>
<div class="a" style="left:700px;top:630.72px;width:436px;height:1px;background:#c6c6c6;"></div>
<div class="a" style="left:700px;top:645.29px;width:436px;height:1px;background:#c6c6c6;"></div>
<div class="a" style="left:700px;top:659.86px;width:436px;height:1px;background:#c6c6c6;"></div>
<div class="a" style="left:700px;top:674.43px;width:436px;height:1px;background:#c6c6c6;"></div>
<span class="t" style="left:701.50px;top:209.50px;font-size:11px;line-height:15px;color:#4a4a4a;transform:scaleX(1.021);transform-origin:0 0;">Caption</span>
<span class="t" style="left:873.50px;top:209.50px;font-size:11px;line-height:15px;color:#4a4a4a;transform:scaleX(0.951);transform-origin:0 0;">Permissions</span>
<span class="t" style="left:701.50px;top:223.50px;font-size:11px;line-height:15px;color:#4a4a4a;transform:scaleX(1.017);transform-origin:0 0;">Picture Caption Arrangement</span>
<span class="t" style="left:867.60px;top:223.50px;font-size:11px;line-height:15px;color:#4a4a4a;transform:scaleX(1.012);transform-origin:0 0;">Right</span>
<span class="t" style="left:701.50px;top:238.50px;font-size:11px;line-height:15px;color:#4a4a4a;transform:scaleX(0.999);transform-origin:0 0;">Visible</span>
<span class="t" style="left:867.60px;top:238.50px;font-size:11px;line-height:15px;color:#4a4a4a;transform:scaleX(0.802);transform-origin:0 0;">Yes</span>
<span class="t" style="left:701.50px;top:252.50px;font-size:11px;line-height:15px;color:#4a4a4a;transform:scaleX(0.973);transform-origin:0 0;">Picture Type</span>
<span class="t" style="left:867.60px;top:252.50px;font-size:11px;line-height:15px;color:#4a4a4a;transform:scaleX(0.983);transform-origin:0 0;">Embedded</span>
<span class="t" style="left:701.50px;top:267.50px;font-size:11px;line-height:15px;color:#4a4a4a;transform:scaleX(0.958);transform-origin:0 0;">Picture</span>
<span class="t" style="left:867.60px;top:267.50px;font-size:11px;line-height:15px;color:#4a4a4a;transform:scaleX(0.997);transform-origin:0 0;">314756-20.png</span>
<span class="t" style="left:701.50px;top:281.50px;font-size:11px;line-height:15px;color:#4a4a4a;transform:scaleX(1.067);transform-origin:0 0;">Width</span>
<span class="t" style="left:867.60px;top:281.50px;font-size:11px;line-height:15px;color:#4a4a4a;transform:scaleX(0.887);transform-origin:0 0;">2.0938"</span>
<span class="t" style="left:701.50px;top:296.50px;font-size:11px;line-height:15px;color:#4a4a4a;transform:scaleX(1.044);transform-origin:0 0;">Height</span>
<span class="t" style="left:867.60px;top:296.50px;font-size:11px;line-height:15px;color:#4a4a4a;transform:scaleX(0.948);transform-origin:0 0;">0.5"</span>
<span class="t" style="left:701.50px;top:311.50px;font-size:11px;line-height:15px;color:#4a4a4a;transform:scaleX(0.965);transform-origin:0 0;">Back Color</span>
<span class="t" style="left:867.60px;top:311.50px;font-size:11px;line-height:15px;color:#4a4a4a;transform:scaleX(0.939);transform-origin:0 0;">#455867</span>
<span class="t" style="left:701.50px;top:325.50px;font-size:11px;line-height:15px;color:#4a4a4a;transform:scaleX(0.961);transform-origin:0 0;">Border Style</span>
<span class="t" style="left:867.60px;top:325.50px;font-size:11px;line-height:15px;color:#4a4a4a;transform:scaleX(1.003);transform-origin:0 0;">Transparent</span>
<span class="t" style="left:701.50px;top:340.50px;font-size:11px;line-height:15px;color:#4a4a4a;transform:scaleX(1.030);transform-origin:0 0;">Border Width</span>
<span class="t" style="left:867.60px;top:340.50px;font-size:11px;line-height:15px;color:#4a4a4a;transform:scaleX(1.011);transform-origin:0 0;">Hairline</span>
<span class="t" style="left:701.50px;top:354.50px;font-size:11px;line-height:15px;color:#4a4a4a;transform:scaleX(1.002);transform-origin:0 0;">Border Color</span>
<span class="t" style="left:867.60px;top:354.50px;font-size:11px;line-height:15px;color:#4a4a4a;transform:scaleX(1.011);transform-origin:0 0;">No Color</span>
<span class="t" style="left:701.50px;top:369.50px;font-size:11px;line-height:15px;color:#4a4a4a;transform:scaleX(0.993);transform-origin:0 0;">Hover Color</span>
<span class="t" style="left:867.60px;top:369.50px;font-size:11px;line-height:15px;color:#4a4a4a;transform:scaleX(0.942);transform-origin:0 0;">#242F38</span>
<span class="t" style="left:701.50px;top:383.50px;font-size:11px;line-height:15px;color:#4a4a4a;transform:scaleX(0.967);transform-origin:0 0;">Pressed Color</span>
<span class="t" style="left:867.60px;top:383.50px;font-size:11px;line-height:15px;color:#4a4a4a;transform:scaleX(0.942);transform-origin:0 0;">#242F38</span>
<span class="t" style="left:701.50px;top:398.50px;font-size:11px;line-height:15px;color:#4a4a4a;transform:scaleX(0.997);transform-origin:0 0;">Hover Fore Color</span>
<span class="t" style="left:867.60px;top:398.50px;font-size:11px;line-height:15px;color:#4a4a4a;transform:scaleX(0.999);transform-origin:0 0;">Background 1</span>
<span class="t" style="left:701.50px;top:413.50px;font-size:11px;line-height:15px;color:#4a4a4a;transform:scaleX(0.973);transform-origin:0 0;">Pressed Fore Color</span>
<span class="t" style="left:867.60px;top:413.50px;font-size:11px;line-height:15px;color:#4a4a4a;transform:scaleX(0.999);transform-origin:0 0;">Background 1</span>
<span class="t" style="left:701.50px;top:427.50px;font-size:11px;line-height:15px;color:#4a4a4a;transform:scaleX(0.985);transform-origin:0 0;">Font Name</span>
<span class="t" style="left:867.60px;top:427.50px;font-size:11px;line-height:15px;color:#4a4a4a;transform:scaleX(0.963);transform-origin:0 0;">Arial</span>
<span class="t" style="left:701.50px;top:442.50px;font-size:11px;line-height:15px;color:#4a4a4a;transform:scaleX(1.030);transform-origin:0 0;">Alignment</span>
<span class="t" style="left:867.60px;top:442.50px;font-size:11px;line-height:15px;color:#4a4a4a;transform:scaleX(0.963);transform-origin:0 0;">Center</span>
<span class="t" style="left:701.50px;top:456.50px;font-size:11px;line-height:15px;color:#4a4a4a;transform:scaleX(0.958);transform-origin:0 0;">Font Size</span>
<span class="t" style="left:867.60px;top:456.50px;font-size:11px;line-height:15px;color:#4a4a4a;transform:scaleX(0.865);transform-origin:0 0;">13</span>
<span class="t" style="left:701.50px;top:471.50px;font-size:11px;line-height:15px;color:#4a4a4a;transform:scaleX(1.057);transform-origin:0 0;">Font Weight</span>
<span class="t" style="left:867.60px;top:471.50px;font-size:11px;line-height:15px;color:#4a4a4a;transform:scaleX(0.973);transform-origin:0 0;">Normal</span>
<span class="t" style="left:701.50px;top:485.50px;font-size:11px;line-height:15px;color:#4a4a4a;transform:scaleX(1.037);transform-origin:0 0;">Font Underline</span>
<span class="t" style="left:867.60px;top:485.50px;font-size:11px;line-height:15px;color:#4a4a4a;transform:scaleX(0.946);transform-origin:0 0;">No</span>
<span class="t" style="left:701.50px;top:500.50px;font-size:11px;line-height:15px;color:#4a4a4a;transform:scaleX(1.032);transform-origin:0 0;">Font Italic</span>
<span class="t" style="left:867.60px;top:500.50px;font-size:11px;line-height:15px;color:#4a4a4a;transform:scaleX(0.946);transform-origin:0 0;">No</span>
<span class="t" style="left:701.50px;top:515.50px;font-size:11px;line-height:15px;color:#4a4a4a;transform:scaleX(0.991);transform-origin:0 0;">Fore Color</span>
<span class="t" style="left:867.60px;top:515.50px;font-size:11px;line-height:15px;color:#4a4a4a;transform:scaleX(0.929);transform-origin:0 0;">#C9D3DC</span>
<span class="t" style="left:701.50px;top:529.50px;font-size:11px;line-height:15px;color:#4a4a4a;transform:scaleX(0.922);transform-origin:0 0;">Back Style</span>
<span class="t" style="left:867.60px;top:529.50px;font-size:11px;line-height:15px;color:#4a4a4a;transform:scaleX(0.973);transform-origin:0 0;">Normal</span>
<span class="t" style="left:701.50px;top:544.50px;font-size:11px;line-height:15px;color:#4a4a4a;transform:scaleX(1.003);transform-origin:0 0;">Transparent</span>
<span class="t" style="left:867.60px;top:544.50px;font-size:11px;line-height:15px;color:#4a4a4a;transform:scaleX(0.946);transform-origin:0 0;">No</span>
<span class="t" style="left:701.50px;top:558.50px;font-size:11px;line-height:15px;color:#4a4a4a;transform:scaleX(1.015);transform-origin:0 0;">Gridline Style Top</span>
<span class="t" style="left:867.60px;top:558.50px;font-size:11px;line-height:15px;color:#4a4a4a;transform:scaleX(1.003);transform-origin:0 0;">Transparent</span>
<span class="t" style="left:701.50px;top:573.50px;font-size:11px;line-height:15px;color:#4a4a4a;transform:scaleX(1.005);transform-origin:0 0;">Gridline Style Bottom</span>
<span class="t" style="left:867.60px;top:573.50px;font-size:11px;line-height:15px;color:#4a4a4a;transform:scaleX(1.003);transform-origin:0 0;">Transparent</span>
<span class="t" style="left:701.50px;top:587.50px;font-size:11px;line-height:15px;color:#4a4a4a;transform:scaleX(0.995);transform-origin:0 0;">Gridline Style Left</span>
<span class="t" style="left:867.60px;top:587.50px;font-size:11px;line-height:15px;color:#4a4a4a;transform:scaleX(1.003);transform-origin:0 0;">Transparent</span>
<span class="t" style="left:701.50px;top:602.50px;font-size:11px;line-height:15px;color:#4a4a4a;transform:scaleX(1.012);transform-origin:0 0;">Gridline Style Right</span>
<span class="t" style="left:867.60px;top:602.50px;font-size:11px;line-height:15px;color:#4a4a4a;transform:scaleX(1.003);transform-origin:0 0;">Transparent</span>
<span class="t" style="left:701.50px;top:617.50px;font-size:11px;line-height:15px;color:#4a4a4a;transform:scaleX(1.028);transform-origin:0 0;">Gridline Color</span>
<span class="t" style="left:867.60px;top:617.50px;font-size:11px;line-height:15px;color:#4a4a4a;transform:scaleX(0.986);transform-origin:0 0;">Background 1, Darker 35%</span>
<span class="t" style="left:701.50px;top:631.50px;font-size:11px;line-height:15px;color:#4a4a4a;transform:scaleX(1.058);transform-origin:0 0;">Gridline Width Top</span>
<span class="t" style="left:867.60px;top:631.50px;font-size:11px;line-height:15px;color:#4a4a4a;transform:scaleX(1.008);transform-origin:0 0;">1 pt</span>
<span class="t" style="left:701.50px;top:646.50px;font-size:11px;line-height:15px;color:#4a4a4a;transform:scaleX(1.043);transform-origin:0 0;">Gridline Width Bottom</span>
<span class="t" style="left:867.60px;top:646.50px;font-size:11px;line-height:15px;color:#4a4a4a;transform:scaleX(1.008);transform-origin:0 0;">1 pt</span>
<span class="t" style="left:701.50px;top:660.50px;font-size:11px;line-height:15px;color:#4a4a4a;transform:scaleX(1.039);transform-origin:0 0;">Gridline Width Left</span>
<span class="t" style="left:867.60px;top:660.50px;font-size:11px;line-height:15px;color:#4a4a4a;transform:scaleX(1.008);transform-origin:0 0;">1 pt</span>
<svg style="left:0px;top:0px" width="1136" height="675" viewBox="0 0 1136 675" ><path d="M892 166.800l3.600 3.600 3.600-3.600" fill="none" stroke="#555" stroke-width="1.100"/></svg></body></html>
